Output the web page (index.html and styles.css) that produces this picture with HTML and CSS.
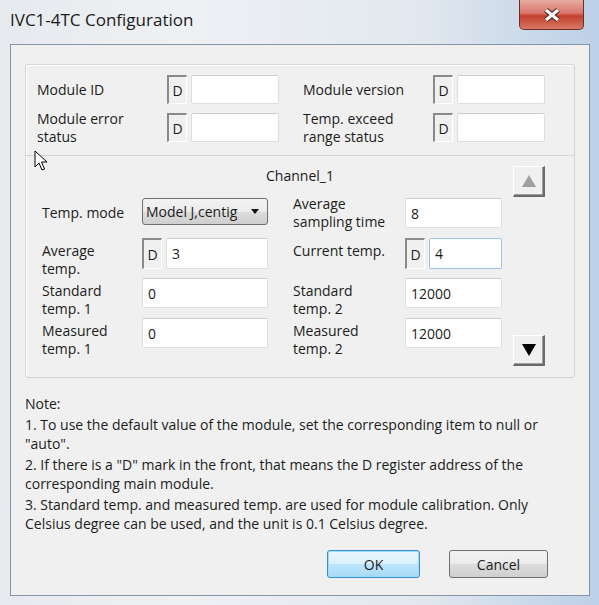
FILE: index.html
```html
<!DOCTYPE html>
<html lang="en">
<head>
  <meta charset="UTF-8" />
  <title>IVC1-4TC Configuration</title>
  <link rel="stylesheet" href="styles.css">
</head>
<body>
  <div class="window">
    <div class="titlebar">
      <span class="title">IVC1-4TC Configuration</span>
      <button class="closeBtn" title="Close">
        <svg width="20" height="16" viewBox="0 0 20 16">
          <path d="M4 3 L16 13 M16 3 L4 13" stroke="#4a2621" stroke-width="5.5" fill="none"/>
          <path d="M4 3 L16 13 M16 3 L4 13" stroke="#fff" stroke-width="3" fill="none"/>
        </svg>
      </button>
    </div>

    <div class="client">
      <div class="groupBox">
        <div class="moduleInfo">
          <div class="pair">
            <label>Module ID</label>
            <div class="field"><span class="dMark">D</span><input type="text" class="dInput"></div>
          </div>
          <div class="pair">
            <label>Module version</label>
            <div class="field"><span class="dMark">D</span><input type="text" class="dInput"></div>
          </div>
          <div class="pair">
            <label>Module error<br>status</label>
            <div class="field"><span class="dMark">D</span><input type="text" class="dInput"></div>
          </div>
          <div class="pair">
            <label>Temp. exceed<br>range status</label>
            <div class="field"><span class="dMark">D</span><input type="text" class="dInput"></div>
          </div>
        </div>

        <div class="channel">
          <div class="channelHead">
            <span></span>
            <span class="channelName">Channel_1</span>
            <button class="arrowBtn up">
              <svg width="14" height="12" viewBox="0 0 14 12"><polygon points="7,0 14,12 0,12" fill="#a0a0a0"/></svg>
            </button>
          </div>
          <div class="channelBody">
            <div class="channelGrid">
              <label class="mid">Temp. mode</label>
              <div class="select">
                <span>Model J,centig</span>
                <svg width="8" height="5" viewBox="0 0 8 5"><polygon points="0,0 8,0 4,5" fill="#111"/></svg>
              </div>
              <label class="right mid">Average<br>sampling time</label>
              <input type="text" class="valInput" value="8">

              <label>Average<br>temp.</label>
              <div class="field"><span class="dMark">D</span><input type="text" class="dInput" value="3"></div>
              <label class="right">Current temp.</label>
              <div class="field"><span class="dMark">D</span><input type="text" class="dInput focused" value="4"></div>

              <label>Standard<br>temp. 1</label>
              <input type="text" class="valInput" value="0">
              <label class="right">Standard<br>temp. 2</label>
              <input type="text" class="valInput" value="12000">

              <label>Measured<br>temp. 1</label>
              <input type="text" class="valInput" value="0">
              <label class="right">Measured<br>temp. 2</label>
              <input type="text" class="valInput" value="12000">
            </div>
            <button class="arrowBtn down">
              <svg width="14" height="12" viewBox="0 0 14 12"><polygon points="0,0 14,0 7,12" fill="#000"/></svg>
            </button>
          </div>
        </div>
      </div>

      <div class="note">
        <p>Note:</p>
        <p>1. To use the default value of the module, set the corresponding item to null or<br>"auto".</p>
        <p>2. If there is a "D" mark in the front, that means the D register address of the<br>corresponding main module.</p>
        <p>3. Standard temp. and measured temp. are used for module calibration. Only<br>Celsius degree can be used, and the unit is 0.1 Celsius degree.</p>
      </div>

      <div class="actions">
        <button class="okBtn">OK</button>
        <button class="cancelBtn">Cancel</button>
      </div>
    </div>

    <svg class="cursor" width="14" height="22" viewBox="0 0 14 22">
      <path d="M1 1 L1 17 L5 13 L8 20 L10.5 19 L7.5 12 L13 12 Z" fill="#fff" stroke="#000" stroke-width="1" stroke-linejoin="miter"/>
    </svg>
  </div>
</body>
</html>
```

FILE: styles.css
```css
* { box-sizing: border-box; }
body {
  margin: 0;
  width: 599px;
  height: 605px;
  overflow: hidden;
  font-family: 'Open Sans', 'Noto Sans', sans-serif;
  font-size: 14px;
  color: #1c1c1c;
}
.window {
  position: relative;
  height: 605px;
  padding: 0 9px 9px 10px;
  background: linear-gradient(to right, #e6eaee 0%, #eef1f4 30%, #e2e8ef 70%, #bcd0e7 100%);
}
.titlebar {
  height: 44px;
  display: flex;
  align-items: flex-start;
  justify-content: space-between;
}
.title {
  font-size: 17px;
  line-height: 23px;
  margin-top: 8px;
  color: #1a1a1a;
}
.closeBtn {
  width: 65px;
  height: 30px;
  margin-right: 6px;
  padding: 0;
  border: 1px solid #6e2c25;
  border-top: none;
  border-radius: 0 0 5px 5px;
  background: linear-gradient(#e8aca2, #d6766a 45%, #c4402f 55%, #d77a66);
  display: flex;
  align-items: center;
  justify-content: center;
}
.client {
  height: 552px;
  border: 1px solid #8494a5;
  background: #f0f0f0;
  padding: 19px 14px 0;
  display: flex;
  flex-direction: column;
}
.groupBox {
  height: 314px;
  border: 1px solid #d5d5d5;
  border-radius: 3px;
  box-shadow: inset 1px 1px 0 #fff;
}
.moduleInfo {
  height: 90px;
  padding: 10px 0 0 11px;
  display: grid;
  grid-template-columns: 242px 242px;
  column-gap: 24px;
  row-gap: 9px;
  align-content: start;
}
.pair {
  display: flex;
  align-items: center;
  height: 29px;
}
.pair label {
  width: 130px;
  line-height: 18px;
}
.field {
  display: flex;
  gap: 4px;
  height: 29px;
}
.dMark {
  width: 20px;
  flex: none;
  height: 100%;
  display: flex;
  align-items: center;
  justify-content: center;
  border-left: 2px solid #8a8a8a;
  border-top: 2px solid #8a8a8a;
  border-right: 1px solid #fff;
  border-bottom: 1px solid #fff;
  font-size: 14px;
}
input {
  font-family: inherit;
  font-size: 14px;
  color: #1c1c1c;
  background: #fff;
  border: 1px solid #dedede;
  border-top-color: #cbcbcb;
  border-radius: 2px;
  padding: 0 5px;
  outline: none;
}
.dInput { width: 88px; height: 100%; }
.focused { border-color: #9cc3e6; }
.channel {
  border-top: 1px solid #d5d5d5;
}
.channelHead {
  height: 42px;
  padding: 10px 29px 0;
  display: grid;
  grid-template-columns: 1fr auto 1fr;
  align-items: start;
}
.channelName {
  line-height: 19px;
}
.arrowBtn {
  width: 32px;
  height: 31px;
  padding: 0;
  background: #f0f0f0;
  border-top: 1px solid #fff;
  border-left: 1px solid #fff;
  border-right: 2px solid #6a6a6a;
  border-bottom: 2px solid #6a6a6a;
  box-shadow: inset -1px -1px 0 #a0a0a0;
  display: flex;
  align-items: center;
  justify-content: center;
}
.arrowBtn.up { justify-self: end; }
.channelBody {
  display: flex;
  padding: 0 29px 10px 16px;
}
.channelGrid {
  display: grid;
  grid-template-columns: 100px 126px 137px 97px;
  grid-auto-rows: 30px;
  row-gap: 10px;
  margin-bottom: 18px;
}
.channelGrid label {
  line-height: 18px;
  padding-top: 4px;
}
.channelGrid label.mid {
  align-self: center;
  padding-top: 0;
}
.channelGrid label.right { padding-left: 25px; }
.valInput { height: 30px; width: 100%; min-width: 0; }
.channelGrid .field { height: 31px; min-width: 0; }
.channelGrid .field .dInput { width: 0; min-width: 0; flex: 1; }
.select {
  height: 27px;
  border: 1px solid #707070;
  border-radius: 3px;
  background: linear-gradient(#f3f3f3, #ebebeb 50%, #dddddd 50%, #cfcfcf);
  display: flex;
  align-items: center;
  justify-content: space-between;
  padding: 0 8px 0 3px;
}
.arrowBtn.down {
  margin-left: auto;
  align-self: flex-end;
}
.note {
  margin-top: 16px;
  line-height: 19px;
  white-space: nowrap;
}
.note p { margin: 0 0 2px; }
.actions {
  margin-top: auto;
  margin-bottom: 17px;
  padding-right: 27px;
  display: flex;
  justify-content: flex-end;
  gap: 29px;
}
.actions button {
  height: 28px;
  font-family: inherit;
  font-size: 14px;
  color: #1c1c1c;
  border-radius: 3px;
}
.okBtn {
  width: 93px;
  border: 1px solid #3c8fc4;
  background: linear-gradient(#eaf6fd, #d9f0fc 50%, #bee6fd 50%, #a7d9f5);
  box-shadow: inset 0 0 0 1px #9fdcf9;
}
.cancelBtn {
  width: 99px;
  border: 1px solid #707070;
  background: linear-gradient(#f2f2f2, #ebebeb 50%, #dddddd 50%, #cfcfcf);
}
.cursor {
  position: absolute;
  left: 34px;
  top: 150px;
}
```
